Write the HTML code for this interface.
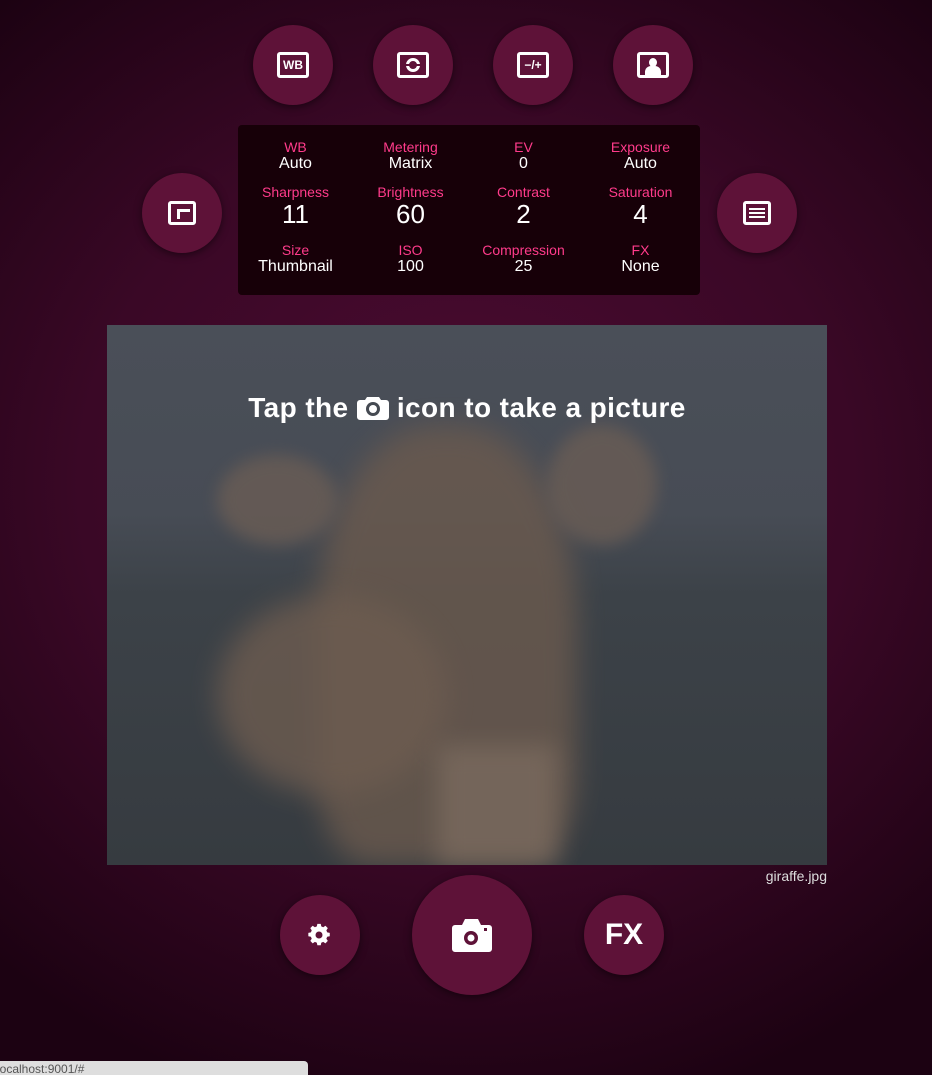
<!DOCTYPE html>
<html><head><meta charset="utf-8"><style>
*{margin:0;padding:0;box-sizing:border-box}
body{width:932px;height:1075px;overflow:hidden;font-family:"Liberation Sans",sans-serif;
background:radial-gradient(ellipse 75% 60% at 50% 45%,#4c0b32 0%,#3a0826 55%,#1c0212 100%);position:relative}
.b{position:absolute;border-radius:50%;background:#5e1238;box-shadow:0 2px 8px rgba(0,0,0,.5);display:flex;align-items:center;justify-content:center;color:#fff}
.ic{border:3px solid #fff;border-radius:3px;width:32px;height:26px;display:flex;align-items:center;justify-content:center;font-weight:bold;font-size:12px;color:#fff}
.panel{position:absolute;left:238px;top:125px;width:462px;height:170px;background:#170008;border-radius:4px}
.c{position:absolute;width:115px;text-align:center}
.l{color:#ff3b8b;font-size:14px;line-height:16px}
.v{color:#fff;font-size:16px;line-height:18px}
.vb{color:#fff;font-size:26px;line-height:28px}
.img{position:absolute;left:107px;top:325px;width:720px;height:540px;overflow:hidden;
background:linear-gradient(180deg,#4a4f58 0%,#474c55 35%,#3c4248 50%,#363b40 100%)}
.t{position:absolute;left:0;width:720px;top:67px;text-align:center;color:#fff;font-size:28px;font-weight:bold;letter-spacing:0.4px}
</style></head><body>
<div class="b" style="left:253px;top:25px;width:80px;height:80px"><div class="ic">WB</div></div>
<div class="b" style="left:373px;top:25px;width:80px;height:80px"><div class="ic"><div style="width:14px;height:14px;border:3px solid #fff;border-radius:50%;position:relative"><div style="position:absolute;left:-4px;top:3px;width:18px;height:2px;background:#5e1238"></div></div></div></div>
<div class="b" style="left:493px;top:25px;width:80px;height:80px"><div class="ic">−/+</div></div>
<div class="b" style="left:613px;top:25px;width:80px;height:80px"><div class="ic" style="align-items:flex-end;overflow:hidden"><div style="position:relative;width:16px;height:18px"><div style="position:absolute;left:4px;top:1px;width:8px;height:9px;background:#fff;border-radius:50%"></div><div style="position:absolute;left:0;top:9px;width:16px;height:9px;background:#fff;border-radius:6px 6px 0 0"></div></div></div></div>
<div class="b" style="left:142px;top:173px;width:80px;height:80px"><div class="ic" style="width:28px;height:24px;justify-content:flex-end;align-items:flex-end;padding:3px"><div style="width:13px;height:10px;border:3px solid #fff;border-right:none;border-bottom:none"></div></div></div>
<div class="b" style="left:717px;top:173px;width:80px;height:80px"><div class="ic" style="width:28px;height:24px;flex-direction:column;gap:2px;padding:3px"><div style="width:16px;height:2px;background:#fff"></div><div style="width:16px;height:2px;background:#fff"></div><div style="width:16px;height:2px;background:#fff"></div></div></div>

<div class="panel">
<div class="c" style="left:0;top:14px"><div class="l">WB</div><div class="v">Auto</div></div>
<div class="c" style="left:115px;top:14px"><div class="l">Metering</div><div class="v">Matrix</div></div>
<div class="c" style="left:228px;top:14px"><div class="l">EV</div><div class="v">0</div></div>
<div class="c" style="left:345px;top:14px"><div class="l">Exposure</div><div class="v">Auto</div></div>
<div class="c" style="left:0;top:59px"><div class="l">Sharpness</div><div class="vb">11</div></div>
<div class="c" style="left:115px;top:59px"><div class="l">Brightness</div><div class="vb">60</div></div>
<div class="c" style="left:228px;top:59px"><div class="l">Contrast</div><div class="vb">2</div></div>
<div class="c" style="left:345px;top:59px"><div class="l">Saturation</div><div class="vb">4</div></div>
<div class="c" style="left:0;top:117px"><div class="l">Size</div><div class="v">Thumbnail</div></div>
<div class="c" style="left:115px;top:117px"><div class="l">ISO</div><div class="v">100</div></div>
<div class="c" style="left:228px;top:117px"><div class="l">Compression</div><div class="v">25</div></div>
<div class="c" style="left:345px;top:117px"><div class="l">FX</div><div class="v">None</div></div>
</div>

<div class="img">
<div style="position:absolute;left:210px;top:100px;width:260px;height:440px;background:#6b5a4e;border-radius:45% 45% 20% 20%;filter:blur(14px);opacity:.8"></div>
<div style="position:absolute;left:110px;top:270px;width:230px;height:200px;background:#6d5c50;border-radius:50%;filter:blur(14px);opacity:.8"></div>
<div style="position:absolute;left:110px;top:130px;width:120px;height:90px;background:#6a5d55;border-radius:50%;filter:blur(8px);opacity:.8"></div>
<div style="position:absolute;left:440px;top:100px;width:110px;height:120px;background:#6a5d55;border-radius:50%;filter:blur(8px);opacity:.8"></div>
<div style="position:absolute;left:330px;top:420px;width:120px;height:120px;background:#7a6a5e;filter:blur(12px);opacity:.8"></div>
<div class="t">Tap the <svg width="32" height="26" viewBox="0 0 32 26" style="vertical-align:-3px"><path d="M10 3h12l2 3h5a3 3 0 0 1 3 3v14a3 3 0 0 1-3 3H3a3 3 0 0 1-3-3V9a3 3 0 0 1 3-3h5z" fill="#fff"/><circle cx="16" cy="15" r="7" fill="#454a52"/><circle cx="16" cy="15" r="4" fill="#fff"/></svg> icon to take a picture</div>
</div>
<div style="position:absolute;right:105px;top:868px;color:#ddd;font-size:14px">giraffe.jpg</div>

<div class="b" style="left:280px;top:895px;width:80px;height:80px"><svg width="24" height="24" viewBox="0 0 24 24"><path fill="#fff" d="M10 1h4l.6 3 2.3 1 2.6-1.7 2.8 2.8L20.6 8.7l1 2.3 3 .6v4l-3 .6-1 2.3 1.7 2.6-2.8 2.8-2.6-1.7-2.3 1-.6 3h-4l-.6-3-2.3-1-2.6 1.7-2.8-2.8 1.7-2.6-1-2.3-3-.6v-4l3-.6 1-2.3L1.7 6.1 4.5 3.3 7.1 5l2.3-1z" transform="scale(.85) translate(1 0)"/><circle cx="11" cy="12" r="3.5" fill="#5e1238"/></svg></div>
<div class="b" style="left:412px;top:875px;width:120px;height:120px"><svg width="40" height="34" viewBox="0 0 40 34"><path d="M13 1h13l3 6h8a3 3 0 0 1 3 3v21a3 3 0 0 1-3 3H3a3 3 0 0 1-3-3V10a3 3 0 0 1 3-3h7z" fill="#fff"/><circle cx="19" cy="20" r="7" fill="#5e1238"/><circle cx="19" cy="20" r="3.5" fill="#fff"/><rect x="32" y="10" width="3" height="3" fill="#5e1238"/></svg></div>
<div class="b" style="left:584px;top:895px;width:80px;height:80px;font-weight:bold;font-size:30px">FX</div>

<div style="position:absolute;left:0;top:1061px;width:308px;height:14px;background:#dedede;border-radius:0 4px 0 0;color:#555;font-size:12px;line-height:16px;text-indent:-3px;overflow:hidden">localhost:9001/#</div>
</body></html>
